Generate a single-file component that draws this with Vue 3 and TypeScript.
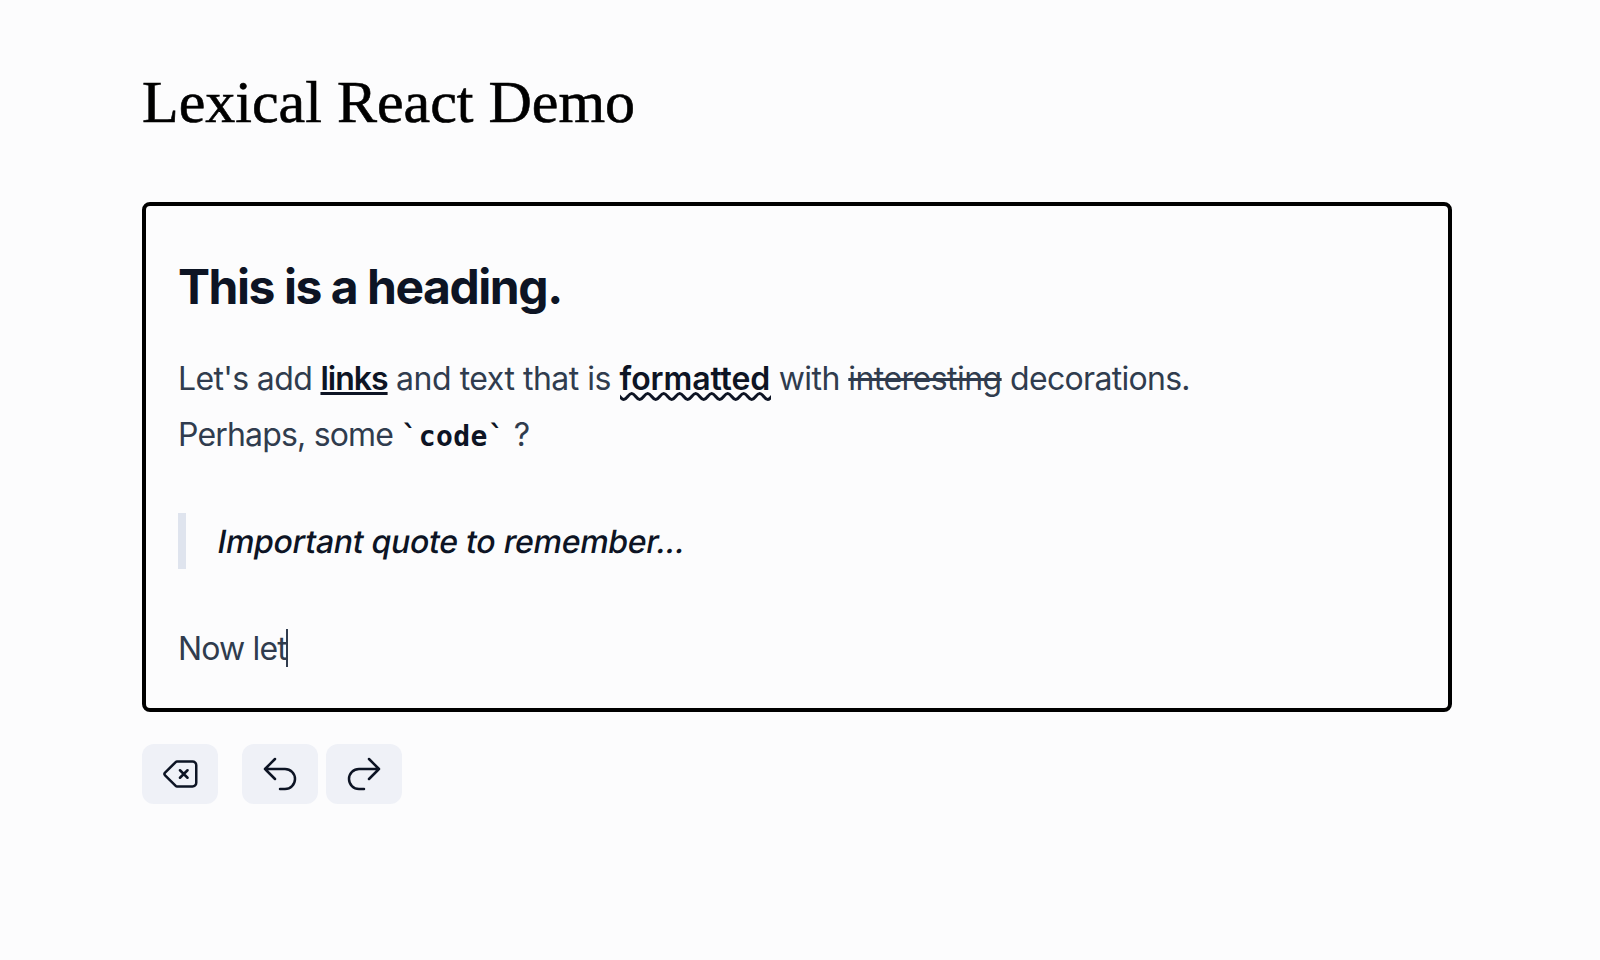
<script setup lang="ts">
interface ToolButton {
  id: string
  label: string
  path: string
}

const buttons: ToolButton[] = [
  {
    id: 'clear',
    label: 'Clear',
    path: 'M12 9.75L14.25 12m0 0l2.25 2.25M14.25 12l2.25-2.25M14.25 12L12 14.25m-2.58 4.92l-6.375-6.375a1.125 1.125 0 010-1.59L9.42 4.83c.211-.211.498-.33.796-.33H19.5a2.25 2.25 0 012.25 2.25v10.5a2.25 2.25 0 01-2.25 2.25h-9.284c-.298 0-.585-.119-.796-.33z',
  },
  { id: 'undo', label: 'Undo', path: 'M9 15L3 9m0 0l6-6M3 9h12a6 6 0 010 12h-3' },
  { id: 'redo', label: 'Redo', path: 'M15 15l6-6m0 0l-6-6m6 6H9a6 6 0 000 12h3' },
]

const wave: string = 'M-4.3 2.5' + 'c3.4 0 4.6 6 8 6s4.6-6 8-6'.repeat(10)
</script>

<template>
  <main class="page">
    <h1 class="title">Lexical React Demo</h1>
    <section class="editor">
      <h2 class="heading">This is a heading.</h2>
      <p class="para">
        <span class="lead">Let's add </span><a class="link">links</a><span class="middle"> and text that is </span><strong class="wavy">formatted<svg class="wave" viewBox="0 0 151 11"><path :d="wave" /></svg></strong> with <s class="strike">interesting</s> <span class="tight">decorations.</span><br /><span class="tighter">Perhaps, some </span><code class="code">`code`</code> ?
      </p>
      <blockquote class="quote"><span class="slant">Important quote to remember...</span></blockquote>
      <p class="para last">Now let<span class="caret"></span></p>
    </section>
    <div class="toolbar">
      <button v-for="b in buttons" :key="b.id" :class="['tool', b.id]" :aria-label="b.label">
        <svg viewBox="0 0 24 24"><path :d="b.path" /></svg>
      </button>
    </div>
  </main>
</template>

<style>
body {
  background: #fcfcfd;
}
</style>

<style scoped>
.page {
  box-sizing: border-box;
  height: 960px;
  padding: 68px 148px 0 142px;
  overflow: hidden;
  background: #fcfcfd;
}
.title {
  margin: 0;
  height: 134px;
  font: 400 60px/68px "Liberation Serif", serif;
  color: #000;
  -webkit-text-stroke: 0.6px #000;
}
.editor {
  box-sizing: border-box;
  height: 510px;
  padding: 49px 32px 0;
  border: 4px solid #000;
  border-radius: 8px;
  font: 400 32px/56px Inter, sans-serif;
  letter-spacing: -0.54px;
  color: #303c4e;
}
.heading {
  margin: 0 0 32px;
  font-size: 48px;
  line-height: 64px;
  font-weight: 700;
  letter-spacing: -1.46px;
  color: #0d1424;
}
.para {
  margin: 0;
  white-space: nowrap;
}
.lead {
  letter-spacing: -0.64px;
}
.middle {
  letter-spacing: -0.48px;
}
.tight {
  letter-spacing: -0.7px;
}
.tighter {
  letter-spacing: -0.82px;
}
.last {
  letter-spacing: -0.85px;
}
.link,
.wavy {
  font-weight: 600;
  color: #0d1424;
}
.link {
  letter-spacing: -1px;
  text-decoration: underline;
  text-decoration-thickness: 3px;
}
.wavy {
  position: relative;
  letter-spacing: -0.1px;
}
.wave {
  position: absolute;
  left: 0;
  bottom: -4px;
  width: 151px;
  height: 11px;
  overflow: hidden;
  fill: none;
  stroke: #0d1424;
  stroke-width: 2.9;
}
.strike {
  text-decoration-thickness: 3px;
}
.code {
  font: 700 28px/1 "DejaVu Sans Mono", monospace;
  letter-spacing: 0.45px;
  color: #0d1424;
}
.quote {
  margin: 50px 0 52px;
  padding-left: 32px;
  border-left: 8px solid #dfe4ee;
  font-weight: 500;
  letter-spacing: -0.3px;
  color: #0d1424;
}
.slant {
  display: inline-block;
  transform: translateY(0.5px) skewX(-10deg);
}
.caret {
  display: inline-block;
  width: 2px;
  height: 38px;
  margin-left: -1px;
  vertical-align: -7px;
  background: #303c4e;
}
.toolbar {
  display: flex;
  gap: 8px;
  margin-top: 32px;
}
.tool {
  box-sizing: border-box;
  width: 76px;
  height: 60px;
  padding: 10px 18px;
  border: 0;
  border-radius: 12px;
  background: #eff1f7;
}
.clear {
  margin-right: 16px;
}
.tool svg {
  display: block;
  width: 40px;
  height: 40px;
  fill: none;
  stroke: #0d1424;
  stroke-width: 1.5;
  stroke-linecap: round;
  stroke-linejoin: round;
}
</style>
